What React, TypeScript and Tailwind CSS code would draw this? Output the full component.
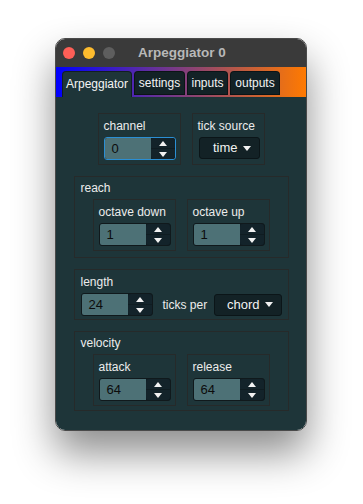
import React from 'react';

const font = { fontFamily: '"Liberation Sans", Arial, sans-serif' };

function Arrows() {
  return (
    <div className="flex w-[24px] flex-col gap-px">
      <div className="flex h-[11px] items-center justify-center rounded-t-[3px] bg-[#13232a]">
        <svg width="8" height="5" viewBox="0 0 8 5"><path d="M0 5 L4 0 L8 5 Z" fill="#f2f2f2" /></svg>
      </div>
      <div className="flex h-[11px] items-center justify-center rounded-b-[3px] bg-[#13232a]">
        <svg width="8" height="5" viewBox="0 0 8 5"><path d="M0 0 L4 5 L8 0 Z" fill="#f2f2f2" /></svg>
      </div>
    </div>
  );
}

function SpinBox({ value, focused = false }: { value: string; focused?: boolean }) {
  return (
    <div
      className={
        focused
          ? 'flex h-[23px] w-[72px] rounded-[3px] border border-[#2b8fd4] bg-[#0f1c21]'
          : 'flex h-[23px] w-[72px] rounded-[3px] border border-[#10191c] bg-[#0f1c21]'
      }
    >
      <div className="flex flex-1 items-center rounded-l-[2px] bg-[#4d7176] pl-[7px] text-[13px] text-[#0c0c0c]">{value}</div>
      <Arrows />
    </div>
  );
}

function Dropdown({ label, width }: { label: string; width: string }) {
  return (
    <div className={`flex h-[22px] items-center justify-end gap-[5px] rounded-[3px] border border-[#0b1518] bg-[#132226] pr-[8px] text-[13px] text-[#f2f2f2] ${width}`}>
      <span>{label}</span>
      <svg width="8" height="5" viewBox="0 0 8 5"><path d="M0 0 L4 5 L8 0 Z" fill="#f2f2f2" /></svg>
    </div>
  );
}

function Label({ children }: { children: React.ReactNode }) {
  return <div className="h-[17px] whitespace-nowrap text-[12px] leading-[17px] text-[#ececec]">{children}</div>;
}

function Field({ label, value, focused = false }: { label: string; value: string; focused?: boolean }) {
  return (
    <div className="flex h-[52px] w-[83px] flex-col border border-[#262a2a] px-[5px] pt-[4px]">
      <Label>{label}</Label>
      <div className="mt-[2px]">
        <SpinBox value={value} focused={focused} />
      </div>
    </div>
  );
}

function Group({ label, bottom, children }: { label: string; bottom: string; children: React.ReactNode }) {
  return (
    <div className={`flex w-[215px] flex-col border border-[#262a2a] px-[6px] pt-[3px] ${bottom}`}>
      <Label>{label}</Label>
      {children}
    </div>
  );
}

const tabs = [
  { name: 'Arpeggiator', w: 'w-[70px]', active: true },
  { name: 'settings', w: 'w-[51px]' },
  { name: 'inputs', w: 'w-[41px]' },
  { name: 'outputs', w: 'w-[50px]' },
];

export default function App() {
  return (
    <div className="h-[504px] w-[363px] bg-white pl-[55px] pt-[38px]" style={font}>
      <div className="flex h-[393px] w-[252px] flex-col overflow-hidden rounded-[10px] border border-[#4a4a4a] shadow-[0_22px_40px_rgba(0,0,0,0.45)]">
        {/* title bar */}
        <div className="relative flex h-[28px] items-center bg-[#3a3a3a] pl-[7px]">
          <div className="flex gap-[8px]">
            <div className="h-[12px] w-[12px] rounded-full bg-[#fe5f57]" />
            <div className="h-[12px] w-[12px] rounded-full bg-[#febc2e]" />
            <div className="h-[12px] w-[12px] rounded-full bg-[#5e5e5e]" />
          </div>
          <div className="absolute inset-0 flex items-center justify-center pl-[2px] text-[13.5px] font-bold text-[#b8b8b8]">
            Arpeggiator 0
          </div>
        </div>
        {/* tab strip */}
        <div className="flex h-[30px] items-end gap-[2px] bg-[linear-gradient(90deg,#0000ff,#ff7a00)] pl-[6px]">
          {tabs.map((t) => (
            <div
              key={t.name}
              className={
                t.active
                  ? `flex h-[26px] ${t.w} items-center justify-center rounded-t-[4px] border border-b-0 border-black/40 bg-[#1e3539] pb-[2px] text-[12px] text-[#f4f4f4]`
                  : `mb-[2px] flex h-[24px] ${t.w} items-center justify-center rounded-t-[4px] border border-black/40 bg-[#132226] text-[12px] text-[#f4f4f4]`
              }
            >
              {t.name}
            </div>
          ))}
        </div>
        {/* content */}
        <div className="flex flex-1 flex-col items-center gap-[11px] bg-[#1e3539] pt-[16px]">
          <div className="flex gap-[11px]">
            <Field label="channel" value="0" focused />
            <div className="flex h-[52px] w-[73px] flex-col border border-[#262a2a] px-[5px] pt-[4px]">
              <Label>tick source</Label>
              <div className="ml-[1px] mt-[2px]">
                <Dropdown label="time" width="w-[61px]" />
              </div>
            </div>
          </div>
          <Group label="reach" bottom="pb-[6px]">
            <div className="mt-[2px] flex justify-center gap-[11px]">
              <Field label="octave down" value="1" />
              <Field label="octave up" value="1" />
            </div>
          </Group>
          <div className="flex w-[215px] flex-col border border-[#262a2a] px-[6px] pb-[3px] pt-[4px]">
            <Label>length</Label>
            <div className="mt-[2px] flex items-center">
              <SpinBox value="24" />
              <span className="ml-[10px] text-[12px] text-[#ececec]">ticks per</span>
              <div className="ml-auto">
                <Dropdown label="chord" width="w-[68px]" />
              </div>
            </div>
          </div>
          <Group label="velocity" bottom="pb-[4px]">
            <div className="mt-[2px] flex justify-center gap-[11px]">
              <Field label="attack" value="64" />
              <Field label="release" value="64" />
            </div>
          </Group>
        </div>
      </div>
    </div>
  );
}
